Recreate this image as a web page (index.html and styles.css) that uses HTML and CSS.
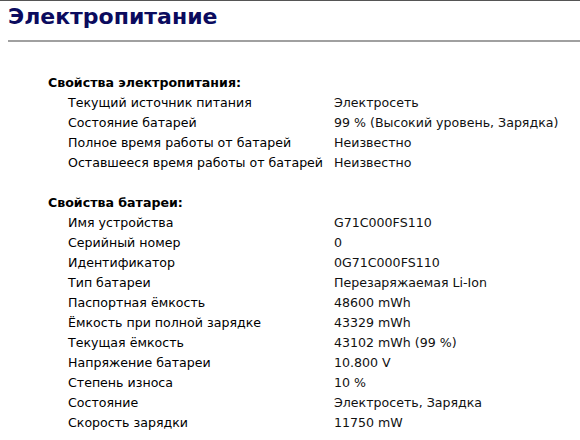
FILE: index.html
```html
<!DOCTYPE html>
<html lang="ru">
<head>
<meta charset="utf-8">
<link rel="stylesheet" href="styles.css">
</head>
<body>
<div class="page">
  <h1 class="title">Электропитание</h1>
  <hr class="rule">
  <div class="report">
    <div class="section">
      <div class="section-head">Свойства электропитания:</div>
      <div class="row"><span class="label">Текущий источник питания</span><span class="value">Электросеть</span></div>
      <div class="row"><span class="label">Состояние батарей</span><span class="value">99 % (Высокий уровень, Зарядка)</span></div>
      <div class="row"><span class="label">Полное время работы от батарей</span><span class="value">Неизвестно</span></div>
      <div class="row"><span class="label">Оставшееся время работы от батарей</span><span class="value">Неизвестно</span></div>
    </div>
    <div class="section">
      <div class="section-head">Свойства батареи:</div>
      <div class="row"><span class="label">Имя устройства</span><span class="value">G71C000FS110</span></div>
      <div class="row"><span class="label">Серийный номер</span><span class="value">0</span></div>
      <div class="row"><span class="label">Идентификатор</span><span class="value">0G71C000FS110</span></div>
      <div class="row"><span class="label">Тип батареи</span><span class="value">Перезаряжаемая Li-Ion</span></div>
      <div class="row"><span class="label">Паспортная ёмкость</span><span class="value">48600 mWh</span></div>
      <div class="row"><span class="label">Ёмкость при полной зарядке</span><span class="value">43329 mWh</span></div>
      <div class="row"><span class="label">Текущая ёмкость</span><span class="value">43102 mWh (99 %)</span></div>
      <div class="row"><span class="label">Напряжение батареи</span><span class="value">10.800 V</span></div>
      <div class="row"><span class="label">Степень износа</span><span class="value">10 %</span></div>
      <div class="row"><span class="label">Состояние</span><span class="value">Электросеть, Зарядка</span></div>
      <div class="row"><span class="label">Скорость зарядки</span><span class="value">11750 mW</span></div>
    </div>
  </div>
</div>
</body>
</html>
```
FILE: styles.css
```css
html, body {
  margin: 0;
  padding: 0;
  background: #fff;
}
body {
  border-top: 1px solid #555;
  font-family: "DejaVu Sans", Verdana, sans-serif;
  color: #000;
}
.page {
  padding: 0 0 0 8px;
}
.title {
  margin: 0;
  padding-top: 3px;
  font-size: 22px;
  line-height: 26px;
  font-weight: bold;
  color: #0b0b5e;
}
.rule {
  margin: 10px 0 0 0;
  border: 0;
  border-top: 2px solid #a0a0a0;
  height: 0;
}
.report {
  padding: 31px 0 0 40px;
  display: flex;
  flex-direction: column;
  gap: 20px;
  font-size: 12.6px;
  line-height: 20px;
}
.section-head {
  font-weight: bold;
}
.row {
  display: grid;
  grid-template-columns: 266px auto;
  padding-left: 20px;
  white-space: nowrap;
}
.value {
  color: #111;
}
```
